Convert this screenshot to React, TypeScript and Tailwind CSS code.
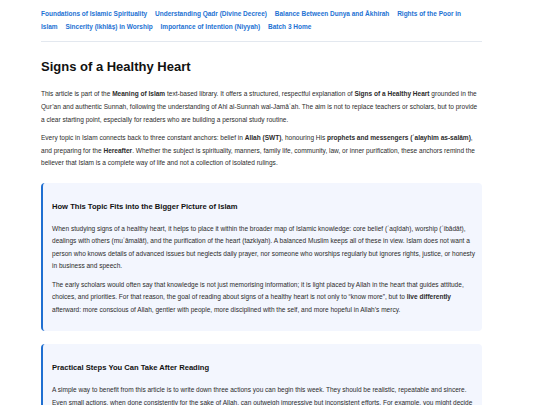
const navLinks = [
  'Foundations of Islamic Spirituality',
  'Understanding Qadr (Divine Decree)',
  'Balance Between Dunya and Ākhirah',
  'Rights of the Poor in Islam',
  'Sincerity (Ikhlāṣ) in Worship',
  'Importance of Intention (Niyyah)',
  'Batch 3 Home',
];

function Card({ title, children }: { title: string; children: React.ReactNode }) {
  return (
    <section className="rounded-[4px] border-l-[2px] border-[#1f6fd1] bg-[#f3f6fe] pl-[9px] pr-[6px] pt-[19px] pb-[15px]">
      <h2 className="text-[7.6px] leading-[10px] font-bold text-[#111]">{title}</h2>
      <div className="mt-[11px] flex flex-col gap-[6px]">{children}</div>
    </section>
  );
}

export default function App() {
  return (
    <div
      className="min-h-[405px] bg-white text-[#2b2b2b]"
      style={{ fontFamily: '"Liberation Sans", Arial, sans-serif' }}
    >
      <div className="ml-[41px] w-[441px] pt-[8px]">
        <div className="pb-[8px] border-b border-[#e3e8ef]">
          <nav className="pr-[12px] text-[6.5px] leading-[12.7px] font-bold text-[#1d72d3]">
            {navLinks.map((l, i) => (
              <span key={l}>
                <a href="#">{l}</a>
                {i < navLinks.length - 1 && <span className="inline-block w-[6px]"> </span>}{' '}
              </span>
            ))}
          </nav>
        </div>

        <h1 className="mt-[17px] text-[13px] leading-[16px] font-bold text-[#111]">
          Signs of a Healthy Heart
        </h1>

        <div className="mt-[13px] flex flex-col gap-[6px] text-[6.54px] leading-[12.6px]">
          <p>
            This article is part of the <strong>Meaning of Islam</strong> text-based library. It offers a
            structured, respectful explanation of <strong>Signs of a Healthy Heart</strong> grounded in the
            Qur’an and authentic Sunnah, following the understanding of Ahl al-Sunnah wal-Jamāʿah. The aim is
            not to replace teachers or scholars, but to provide a clear starting point, especially for readers
            who are building a personal study routine.
          </p>
          <p>
            Every topic in Islam connects back to three constant anchors: belief in <strong>Allah (SWT)</strong>,
            honouring His <strong>prophets and messengers (ʿalayhim as-salām)</strong>, and preparing for the{' '}
            <strong>Hereafter</strong>. Whether the subject is spirituality, manners, family life, community,
            law, or inner purification, these anchors remind the believer that Islam is a complete way of life
            and not a collection of isolated rulings.
          </p>
        </div>

        <div className="mt-[13px] flex flex-col gap-[13px] text-[6.54px] leading-[12.5px]">
          <Card title="How This Topic Fits into the Bigger Picture of Islam">
            <p>
              When studying signs of a healthy heart, it helps to place it within the broader map of Islamic
              knowledge: core belief (ʿaqīdah), worship (ʿibādāt), dealings with others (muʿāmalāt), and the
              purification of the heart (tazkiyah). A balanced Muslim keeps all of these in view. Islam does not
              want a person who knows details of advanced issues but neglects daily prayer, nor someone who
              worships regularly but ignores rights, justice, or honesty in business and speech.
            </p>
            <p>
              The early scholars would often say that knowledge is not just memorising information; it is light
              placed by Allah in the heart that guides attitude, choices, and priorities. For that reason, the
              goal of reading about signs of a healthy heart is not only to “know more”, but to{' '}
              <strong>live differently</strong> afterward: more conscious of Allah, gentler with people, more
              disciplined with the self, and more hopeful in Allah’s mercy.
            </p>
          </Card>
          <Card title="Practical Steps You Can Take After Reading">
            <p>
              A simple way to benefit from this article is to write down three actions you can begin this week.
              They should be realistic, repeatable and sincere. Even small actions, when done consistently for
              the sake of Allah, can outweigh impressive but inconsistent efforts. For example, you might decide
              to set aside a few minutes after each prayer for remembrance and reflection.
            </p>
          </Card>
        </div>
      </div>
    </div>
  );
}
